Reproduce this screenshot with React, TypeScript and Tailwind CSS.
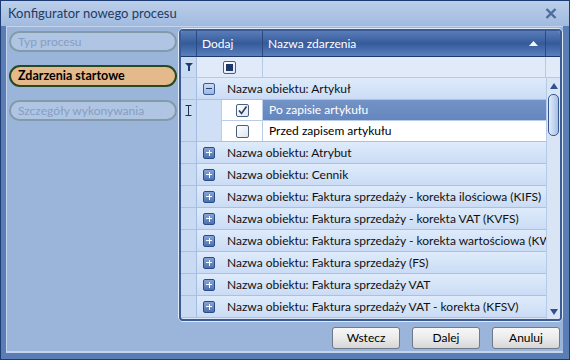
import React from "react";

const FONT = { fontFamily: 'Lato, "Noto Sans", sans-serif' };

const groups = [
  "Nazwa obiektu: Atrybut",
  "Nazwa obiektu: Cennik",
  "Nazwa obiektu: Faktura sprzedaży - korekta ilościowa (KIFS)",
  "Nazwa obiektu: Faktura sprzedaży - korekta VAT (KVFS)",
  "Nazwa obiektu: Faktura sprzedaży - korekta wartościowa (KWFS)",
  "Nazwa obiektu: Faktura sprzedaży (FS)",
  "Nazwa obiektu: Faktura sprzedaży VAT",
  "Nazwa obiektu: Faktura sprzedaży VAT - korekta (KFSV)",
];

function Checkbox({ state }: { state: "on" | "off" | "mixed" }) {
  return (
    <div className="w-[13px] h-[13px] shrink-0 rounded-[2px] border border-[#4a5f7e] bg-gradient-to-br from-[#ffffff] to-[#dfe6f0] flex items-center justify-center">
      {state === "on" ? (
        <svg width="11" height="11" viewBox="0 0 11 11">
          <path d="M2 5.5 L4.5 8.5 L9.5 1.5" fill="none" stroke="#2a3d5e" strokeWidth="1.6" />
        </svg>
      ) : null}
      {state === "mixed" ? <div className="w-[7px] h-[7px] bg-[#1f3668]" /> : null}
    </div>
  );
}

function ExpandBox({ open }: { open?: boolean }) {
  if (open) {
    return (
      <div className="w-[12px] h-[12px] shrink-0 rounded-[2px] border border-[#3a5c96] bg-gradient-to-b from-[#cbdaf1] to-[#9fb8e0] flex items-center justify-center">
        <div className="w-[6px] h-[1px] bg-[#22407a]" />
      </div>
    );
  }
  return (
    <div className="relative w-[12px] h-[12px] shrink-0 rounded-[2px] border border-[#2b4b85] bg-gradient-to-b from-[#86a5d8] to-[#4c70b1] flex items-center justify-center">
      <div className="w-[6px] h-[1px] bg-white" />
      <div className="absolute w-[1px] h-[6px] bg-white" />
    </div>
  );
}

function Indicator({ children }: { children?: React.ReactNode }) {
  return (
    <div className="w-[16px] shrink-0 border-r border-[#a3bce0] bg-[#c9dbf2] flex items-center justify-center">{children}</div>
  );
}

function GroupRow({ label, open, h }: { label: string; open?: boolean; h: string }) {
  return (
    <div className={`flex ${h} border-b border-[#a9c1e3]`}>
      <Indicator />
      <div className="flex-1 min-w-0 flex items-center bg-gradient-to-b from-[#dfebfb] to-[#cadcf5] pl-[6px] overflow-hidden whitespace-nowrap">
        <ExpandBox open={open} />
        <span className="ml-[12px] text-[12px] text-[#111]">{label}</span>
      </div>
    </div>
  );
}

function Pill({ label, active, h }: { label: string; active?: boolean; h: string }) {
  return active ? (
    <div className={`${h} w-[168px] rounded-full border-2 border-[#284a22] bg-[#e4b98b] flex items-center pl-[7px] text-[12.5px] font-bold text-black`}>
      {label}
    </div>
  ) : (
    <div className={`${h} w-[168px] rounded-full border-2 border-[#819ca8] bg-[#b0c5e4] flex items-center pl-[7px] text-[12px] text-[#869ec0]`}>
      {label}
    </div>
  );
}

function Button({ label }: { label: string }) {
  return (
    <div className="w-[68px] h-[22px] rounded-[3px] border border-[#707a88] bg-gradient-to-b from-[#f7f7f7] via-[#ebebeb] to-[#d6d6d6] flex items-center justify-center text-[12px] text-black">
      {label}
    </div>
  );
}

export default function App() {
  return (
    <div className="w-[570px] h-[360px] border border-[#1d3c74] bg-[#5a7db6] flex flex-col" style={FONT}>
      <div className="h-[25px] shrink-0 bg-gradient-to-b from-[#bccfea] to-[#a0badf] flex items-center justify-between pl-[7px] pr-[12px]">
        <span className="text-[13px] text-[#203c66]">Konfigurator nowego procesu</span>
        <svg width="12" height="11" viewBox="0 0 12 11">
          <path d="M1.5 1 L10.5 10 M10.5 1 L1.5 10" stroke="#4d6b9c" strokeWidth="2.4" />
        </svg>
      </div>

      <div className="flex-1 ml-[5px] mr-[6px] mb-[6px] border-l border-t border-[#c4d4ec] border-b-2 border-b-[#c4d4ec] bg-[#9ab5d9] flex flex-col">
        <div className="flex flex-1 pt-[1px]">
          <div className="w-[171px] shrink-0 flex flex-col gap-[13px] pt-[3px] pl-[2px]">
            <Pill label="Typ procesu" h="h-[21px]" />
            <Pill label="Zdarzenia startowe" active h="h-[22px]" />
            <Pill label="Szczegóły wykonywania" h="h-[21px]" />
          </div>

          <div className="w-[385px] h-[294px] rounded-[5px] border border-[#e0e9f6] flex">
            <div className="flex-1 rounded-[4px] border-2 border-[#3a5b93] bg-[#dce8f7] flex flex-col overflow-hidden">
              {/* header */}
              <div className="h-[26px] shrink-0 flex bg-gradient-to-b from-[#5a7db8] via-[#355b9b] to-[#5b80bd] border-b border-[#1d3a6d] text-[12px] text-white">
                <div className="w-[16px] border-r border-[#2a4a80]" />
                <div className="w-[66px] border-r border-[#2a4a80] flex items-center pl-[5px]">Dodaj</div>
                <div className="w-[283px] border-r border-[#2a4a80] flex items-center justify-between pl-[5px] pr-[7px]">
                  <span>Nazwa zdarzenia</span>
                  <svg width="9" height="5" viewBox="0 0 9 5">
                    <path d="M0 5 L4.5 0 L9 5 Z" fill="#f2f6fc" />
                  </svg>
                </div>
                <div className="flex-1" />
              </div>

              {/* filter row */}
              <div className="h-[21px] shrink-0 flex border-b border-[#b5cae8] bg-[#e0eaf8]">
                <Indicator>
                  <svg width="8" height="8" viewBox="0 0 8 8">
                    <path d="M0 0 H8 L5 3 V8 H3 V3 Z" fill="#1f3a6e" />
                  </svg>
                </Indicator>
                <div className="w-[66px] border-r border-[#b5cae8] flex items-center justify-center">
                  <Checkbox state="mixed" />
                </div>
                <div className="w-[283px] border-r border-[#b5cae8]" />
                <div className="flex-1" />
              </div>

              <div className="flex flex-1">
                <div className="w-[365px] flex flex-col">
                  <GroupRow label="Nazwa obiektu: Artykuł" open h="h-[22px]" />

                  <div className="flex h-[21px]">
                    <Indicator>
                      <svg width="7" height="11" viewBox="0 0 7 11">
                        <path d="M0.5 0.5 H6.5 M3.5 0.5 V10.5 M0.5 10.5 H6.5" stroke="#1f2f4e" strokeWidth="1" fill="none" />
                      </svg>
                    </Indicator>
                    <div className="w-[24px] bg-[#cfe0f6]" />
                    <div className="w-[42px] bg-white border-l border-b border-r border-[#b9cde9] flex items-center justify-center">
                      <Checkbox state="on" />
                    </div>
                    <div className="flex-1 border-b border-[#b9cde9] bg-gradient-to-b from-[#7393c6] to-[#6586bd] flex items-center pl-[6px] text-[12px] text-white">
                      Po zapisie artykułu
                    </div>
                  </div>

                  <div className="flex h-[21px] border-b border-[#a9c1e3]">
                    <Indicator />
                    <div className="w-[24px] bg-[#cfe0f6]" />
                    <div className="w-[42px] bg-white border-l border-r border-[#b9cde9] flex items-center justify-center">
                      <Checkbox state="off" />
                    </div>
                    <div className="flex-1 bg-white flex items-center pl-[6px] text-[12px] text-black">Przed zapisem artykułu</div>
                  </div>

                  {groups.map((g) => (
                    <GroupRow key={g} label={g} h="h-[22px]" />
                  ))}
                </div>

                {/* scrollbar */}
                <div className="flex-1 border-l border-[#b5cae8] bg-[#d9e5f5] flex flex-col items-center pt-[5px] pb-[4px]">
                  <svg width="8" height="6" viewBox="0 0 8 6">
                    <path d="M0 6 L4 0 L8 6 Z" fill="#2f5290" />
                  </svg>
                  <div className="mt-[5px] w-[11px] h-[42px] rounded-[5px] border border-[#36578f] bg-gradient-to-r from-[#e3ecf9] to-[#a6c0e7]" />
                  <div className="flex-1" />
                  <svg width="8" height="6" viewBox="0 0 8 6">
                    <path d="M0 0 L8 0 L4 6 Z" fill="#2f5290" />
                  </svg>
                </div>
              </div>
            </div>
          </div>
        </div>

        <div className="h-[28px] shrink-0 flex justify-end items-start gap-[12px] pr-[3px] pt-[4px]">
          <Button label="Wstecz" />
          <Button label="Dalej" />
          <Button label="Anuluj" />
        </div>
      </div>
    </div>
  );
}
